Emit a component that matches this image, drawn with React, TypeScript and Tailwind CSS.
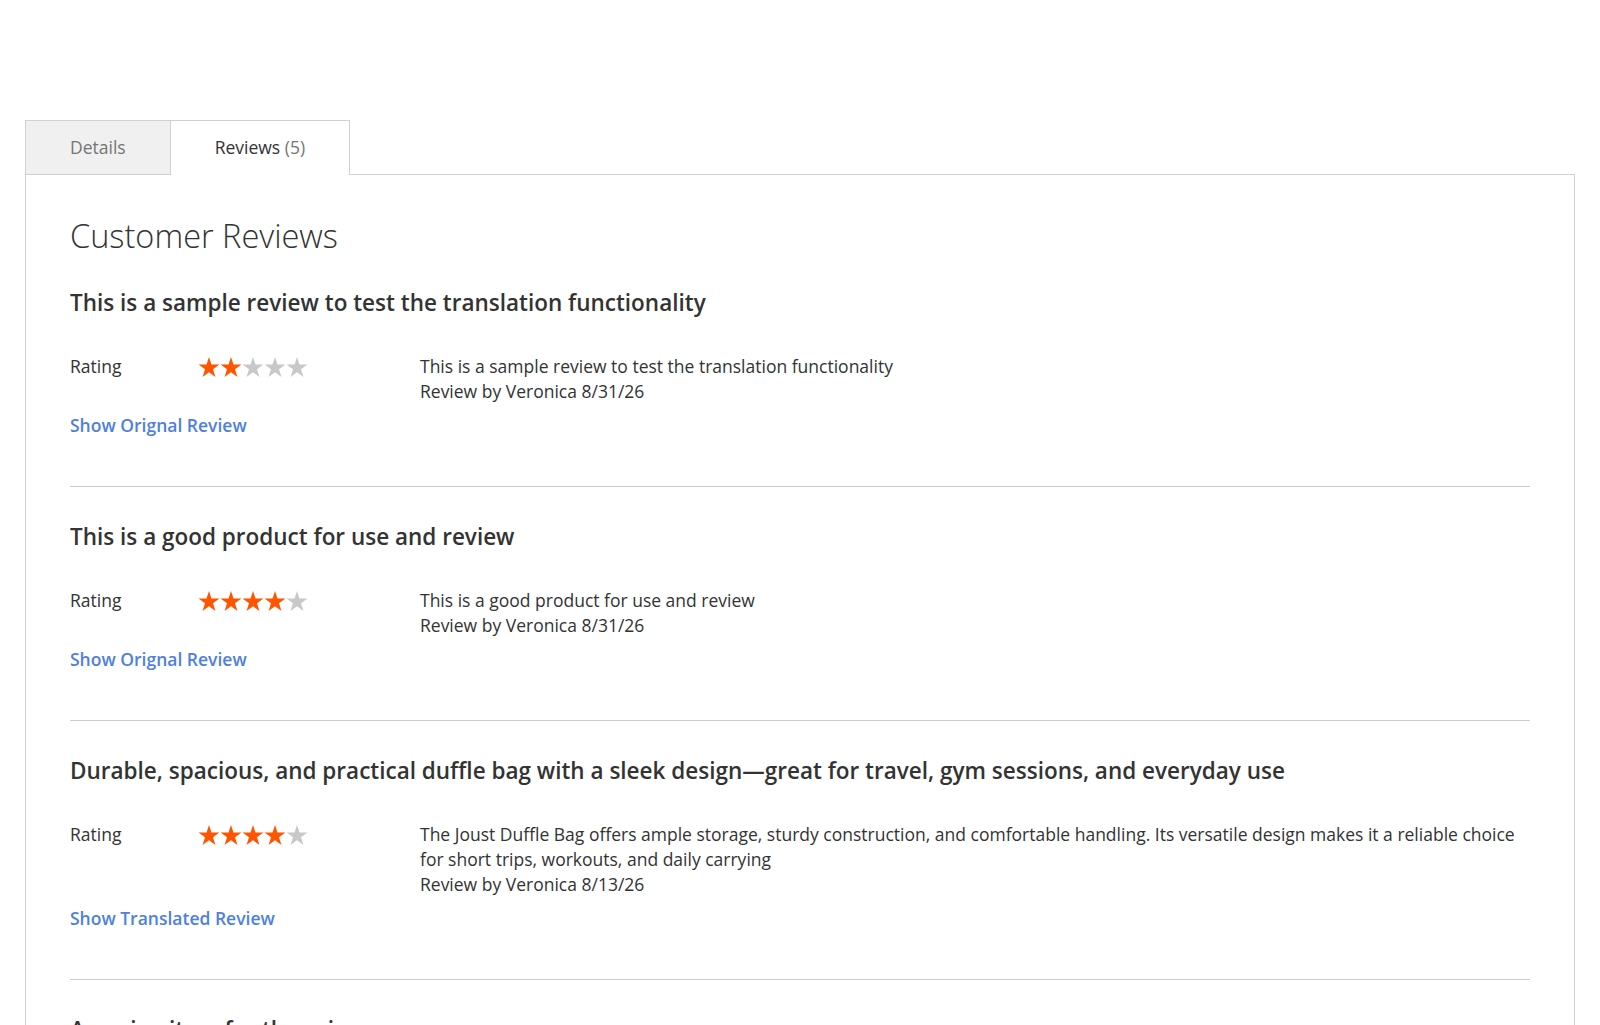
import React from "react";

type Review = {
  title: string;
  rating: number;
  body: string;
  author: string;
  date: string;
  link: string;
};

const reviews: Review[] = [
  {
    title: "This is a sample review to test the translation functionality",
    rating: 2,
    body: "This is a sample review to test the translation functionality",
    author: "Veronica",
    date: "8/31/26",
    link: "Show Orignal Review",
  },
  {
    title: "This is a good product for use and review",
    rating: 4,
    body: "This is a good product for use and review",
    author: "Veronica",
    date: "8/31/26",
    link: "Show Orignal Review",
  },
  {
    title:
      "Durable, spacious, and practical duffle bag with a sleek design—great for travel, gym sessions, and everyday use",
    rating: 4,
    body: "The Joust Duffle Bag offers ample storage, sturdy construction, and comfortable handling. Its versatile design makes it a reliable choice for short trips, workouts, and daily carrying",
    author: "Veronica",
    date: "8/13/26",
    link: "Show Translated Review",
  },
  {
    title: "Amazing item for the price",
    rating: 5,
    body: "Really happy with this bag, the material feels solid and it fits everything I need.",
    author: "Veronica",
    date: "8/10/26",
    link: "Show Translated Review",
  },
  {
    title: "Nice bag, good quality",
    rating: 3,
    body: "Does the job well. Would like more pockets on the inside.",
    author: "Veronica",
    date: "8/02/26",
    link: "Show Orignal Review",
  },
];

// single five-point star, 22 x 20
const StarIcon = ({ filled }: { filled: boolean }) => (
  <svg width="22" height="20" viewBox="0 0 22 20" className="block">
    <path
      d="M11 0 L13.47 7.6 L21.46 7.6 L14.99 12.3 L17.47 19.9 L11 15.2 L4.53 19.9 L7.01 12.3 L0.54 7.6 L8.53 7.6 Z"
      fill={filled ? "#ff5501" : "#c8c8c8"}
    />
  </svg>
);

const Stars = ({ value }: { value: number }) => (
  <div className="flex pt-[3px]">
    {[1, 2, 3, 4, 5].map((i) => (
      <StarIcon key={i} filled={i <= value} />
    ))}
  </div>
);

const ReviewItem = ({ review }: { review: Review }) => (
  <div className="border-b border-[#cccccc] pt-[35px] pb-[48px]">
    <div className="mb-[36px] text-[22.5px] font-semibold leading-[30px]">{review.title}</div>
    <div className="flex">
      <div className="flex w-[350px] shrink-0">
        <div className="w-[128px]">Rating</div>
        <Stars value={review.rating} />
      </div>
      <div className="flex-1">
        <div>{review.body}</div>
        <div>
          Review by {review.author} {review.date}
        </div>
      </div>
    </div>
    <a href="#" className="mt-[9px] block w-fit font-semibold text-[#4e80de]">
      {review.link}
    </a>
  </div>
);

export default function App() {
  return (
    <div className="min-h-screen bg-white px-[25px] pt-[120px] font-['Open_Sans',sans-serif] text-[17.5px] leading-[25px] text-[#333333]">
      {/* tabs */}
      <div className="relative z-10 -mb-px flex">
        <div className="h-[55px] border border-[#d1d1d1] bg-[#f0f0f0] px-[44px] leading-[53px] text-[#757575]">
          Details
        </div>
        <div className="-ml-px h-[55px] border border-b-0 border-[#d1d1d1] bg-white px-[44px] leading-[53px]">
          Reviews <span className="text-[#757575]">(5)</span>
        </div>
      </div>

      {/* tab content */}
      <div className="border border-[#d1d1d1] px-[44px] pt-[43px] pb-[40px]">
        <h2 className="text-[32.5px] font-light leading-[35px]">Customer Reviews</h2>
        {reviews.map((r, i) => (
          <ReviewItem key={i} review={r} />
        ))}
      </div>
    </div>
  );
}
